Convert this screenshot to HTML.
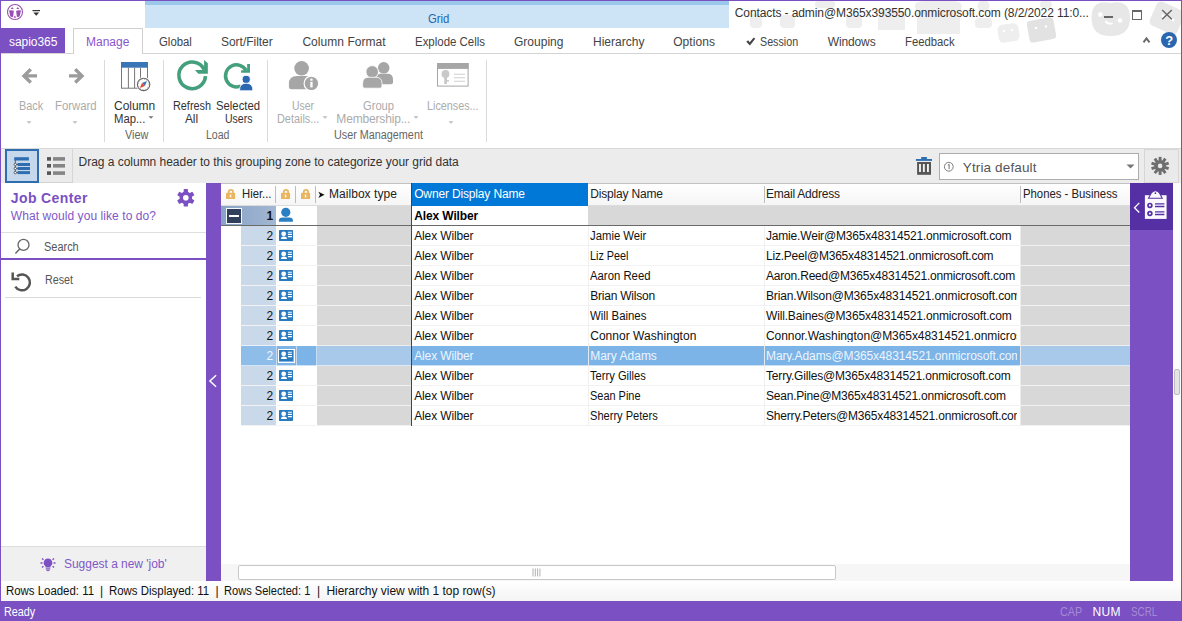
<!DOCTYPE html>
<html lang="en"><head><meta charset="utf-8"><title>sapio365 - Contacts</title>
<style>
html,body{margin:0;padding:0}
body{width:1182px;height:621px;overflow:hidden;background:#fff;position:relative;font-family:"Liberation Sans", sans-serif;font-size:12px}
#app{position:absolute;left:0;top:0;width:1182px;height:621px;overflow:hidden;background:#fff}
#app div,#app span,#app svg{position:absolute}
#app header,#app nav,#app section,#app aside,#app main,#app footer{position:absolute;left:0;top:0;width:0;height:0}
#app span{white-space:nowrap;display:block}
#app svg{overflow:visible}
</style></head><body><div id="app">
<header>
<svg style="left:729px;top:1px" width="452" height="52" viewBox="729 1 452 52"><g fill="#eeeeee"><rect x="750" y="14" width="12" height="14" rx="4"/><rect x="780" y="15" width="15" height="13" rx="4"/><rect x="815" y="1" width="20" height="7" rx="3"/><rect x="846" y="15" width="16" height="13" rx="4"/><path d="M878 30 V16 Q878 8 891.500 8 Q905 8 905 16 V30 Z"/><path d="M917 34 V12 Q910 1 925 1 H952 Q966 1 960 12 V34 Z"/><circle cx="983.500" cy="6" r="6"/><rect x="975" y="18" width="17" height="10" rx="4"/><rect x="998" y="24" width="21" height="18" rx="5" transform="rotate(-8 1008 33)"/><rect x="1028" y="19" width="27" height="22" rx="4" transform="rotate(-10 1041 30)" fill="#e2e2e2"/><rect x="1040" y="1" width="12" height="7" rx="3"/><path d="M1110.500 3 Q1130 -1 1130 18 Q1130 36 1110.500 36 Q1091.500 36 1091.500 18 Q1091.500 -1 1110.500 3 Z" fill="#e7e7e7"/><rect x="1152" y="5" width="30" height="26" rx="5" transform="rotate(24 1167 18)" fill="#e8e8e8"/></g><g fill="#fff"><circle cx="1100.300" cy="14.600" r="2.300"/><circle cx="1120" cy="20.500" r="2.300"/><path d="M1104.500 21.500 q3.500 5 8.500 2.500 l-0.600 -1.600 q-3.500 1.500 -6.300 -1.800 z"/><circle cx="1036" cy="28" r="1.300"/><circle cx="1046" cy="26.500" r="1.300"/><circle cx="1004" cy="31" r="1.200"/><circle cx="1012" cy="30" r="1.200"/><circle cx="1163" cy="16" r="1.400"/><circle cx="1173" cy="20" r="1.400"/></g></svg>
<div style="left:145px;top:1px;width:584px;height:27px;background:#cde3f6;"></div>
<div style="left:145px;top:1px;width:584px;height:4px;background:#9ac7ea;"></div>
<span style="left:428.2px;top:13px;font-size:12px;line-height:12px;color:#2468a8;transform:scaleX(0.9439);transform-origin:0 0;">Grid</span>
<span style="left:734.8px;top:7px;font-size:12px;line-height:12px;color:#333;letter-spacing:-0.100px;">Contacts - admin@M365x393550.onmicrosoft.com (8/2/2022 11:0...</span>
<svg style="left:6px;top:3px" width="18" height="18" viewBox="6 3 18 18"><circle cx="15" cy="12" r="7.500" fill="#fff" stroke="#9a4fb3" stroke-width="1.100"/><path d="M9 10.500 Q11.500 9.700 13.900 10.700 L13.100 16.700 Q11.600 17.500 10.300 16.300 Z M21 10.500 Q18.500 9.700 16.100 10.700 L16.900 16.700 Q18.400 17.500 19.700 16.300 Z" fill="#9a4fb3"/><path d="M10.700 9 L12.200 7 L13.700 9 Z M16.300 9 L17.800 7 L19.300 9 Z M13.600 17.800 L14.900 15.400 L16.200 17.800 Z" fill="#9a4fb3"/></svg>
<svg style="left:32px;top:9px" width="9" height="8" viewBox="32 9 9 8"><rect x="32.500" y="10" width="7.500" height="1.200" fill="#333"/><path d="M33.300 12.600 H39.200 L36.250 15.800 Z" fill="#333"/></svg>
<div style="left:1104px;top:16px;width:9px;height:2px;background:#666;"></div>
<div style="left:1132px;top:10px;width:8px;height:6.500px;border:1px solid #666;border-top-width:2.400px"></div>
<svg style="left:1161.5px;top:10px" width="10" height="10" viewBox="1161.5 10 10 10"><path d="M1161.700 10 L1171.300 19.300 M1171.300 10 L1161.700 19.300" stroke="#666" stroke-width="1.400" fill="none"/></svg>
</header>
<nav>
<div style="left:1px;top:53px;width:1180px;height:1px;background:#d4d4d4;"></div>
<div style="left:1px;top:28px;width:64px;height:24.5px;background:#7a50c2;"></div>
<span style="left:9px;top:36px;font-size:12px;line-height:12px;color:#fff;letter-spacing:-0.043px;">sapio365</span>
<div style="left:73px;top:28px;width:68px;height:25px;background:#fff;border:1px solid #d0d0d0;border-bottom:none"></div>
<span style="left:86px;top:36px;font-size:12px;line-height:12px;color:#8a55d0;letter-spacing:0.005px;">Manage</span>
<span style="left:158.5px;top:36px;font-size:12px;line-height:12px;color:#444;transform:scaleX(0.9485);transform-origin:0 0;">Global</span>
<span style="left:221px;top:36px;font-size:12px;line-height:12px;color:#444;letter-spacing:-0.030px;">Sort/Filter</span>
<span style="left:302.4px;top:36px;font-size:12px;line-height:12px;color:#444;letter-spacing:0.049px;">Column Format</span>
<span style="left:415px;top:36px;font-size:12px;line-height:12px;color:#444;transform:scaleX(0.9540);transform-origin:0 0;">Explode Cells</span>
<span style="left:514px;top:36px;font-size:12px;line-height:12px;color:#444;letter-spacing:0.017px;">Grouping</span>
<span style="left:593px;top:36px;font-size:12px;line-height:12px;color:#444;letter-spacing:0.005px;">Hierarchy</span>
<span style="left:673.2px;top:36px;font-size:12px;line-height:12px;color:#444;letter-spacing:0.068px;">Options</span>
<span style="left:759.6px;top:36px;font-size:12px;line-height:12px;color:#444;transform:scaleX(0.8922);transform-origin:0 0;">Session</span>
<span style="left:827.7px;top:36px;font-size:12px;line-height:12px;color:#444;letter-spacing:-0.121px;">Windows</span>
<span style="left:905px;top:36px;font-size:12px;line-height:12px;color:#444;transform:scaleX(0.9411);transform-origin:0 0;">Feedback</span>
<svg style="left:745px;top:37px" width="11" height="10" viewBox="745 37 11 10"><path d="M746.300 41.800 L748.100 40.200 L749.700 42.300 L753.700 37.600 L755.200 38.800 L749.900 45.600 Z" fill="#444"/></svg>
<svg style="left:1143px;top:37px" width="8" height="7" viewBox="1143 37 8 7"><path d="M1143.500 42.300 L1146.500 38.400 L1149.500 42.300" stroke="#686868" stroke-width="1.900" fill="none"/></svg>
<div style="left:1161px;top:32px;width:16px;height:16px;border-radius:50%;background:#2b67b1"></div>
<span style="left:1165.2px;top:34px;font-size:13px;line-height:13px;color:#fff;font-weight:700;">?</span>
</nav>
<section>
<div style="left:104px;top:60px;width:1px;height:82px;background:#dadada;"></div>
<div style="left:163px;top:60px;width:1px;height:82px;background:#dadada;"></div>
<div style="left:267px;top:60px;width:1px;height:82px;background:#dadada;"></div>
<div style="left:486px;top:60px;width:1px;height:82px;background:#dadada;"></div>
<svg style="left:20px;top:67px" width="18" height="18" viewBox="20 67 18 18"><path d="M37 75.900 H24.500 M30.800 69.300 L24 75.900 L30.800 82.500" stroke="#9b9b9b" stroke-width="3.400" fill="none"/></svg>
<svg style="left:68px;top:67px" width="18" height="18" viewBox="68 67 18 18"><path d="M69 75.900 H81.500 M75.200 69.300 L82 75.900 L75.200 82.500" stroke="#9b9b9b" stroke-width="3.400" fill="none"/></svg>
<span style="left:18.6px;top:100px;font-size:12px;line-height:12px;color:#ababab;transform:scaleX(0.9030);transform-origin:0 0;">Back</span>
<span style="left:54.7px;top:100px;font-size:12px;line-height:12px;color:#ababab;transform:scaleX(0.9451);transform-origin:0 0;">Forward</span>
<svg style="left:25.8px;top:121px" width="6" height="3" viewBox="25.8 121 6 3"><path d="M26.3 121.2 h5 l-2.500 2.600 Z" fill="#bcbcbc"/></svg>
<svg style="left:71.7px;top:121px" width="6" height="3" viewBox="71.7 121 6 3"><path d="M72.2 121.2 h5 l-2.500 2.600 Z" fill="#bcbcbc"/></svg>
<svg style="left:120px;top:61px" width="32" height="32" viewBox="120 61 32 32"><rect x="121.500" y="62.500" width="26" height="25.700" fill="#fff" stroke="#777"/><rect x="121" y="62" width="27" height="5.700" fill="#3a75b5"/><path d="M128.400 67.700 V88 M134.600 67.700 V88 M140.500 67.700 V88" stroke="#777" stroke-width="1"/><circle cx="143.600" cy="84.400" r="7.500" fill="#fff"/><circle cx="143.600" cy="84.400" r="6.200" fill="#fcfcfc" stroke="#666" stroke-width="1.100"/><circle cx="143.600" cy="84.400" r="5.200" fill="none" stroke="#888" stroke-width="0.900" stroke-dasharray="0.700 2.020"/><path d="M146.900 81 L144.900 86 L142 83 Z" fill="#3a75b5"/><path d="M139.900 87.900 L142 83 L144.900 86 Z" fill="#e2492f"/></svg>
<span style="left:114px;top:100px;font-size:12px;line-height:12px;color:#333;letter-spacing:-0.029px;">Column</span>
<span style="left:114px;top:113px;font-size:12px;line-height:12px;color:#333;transform:scaleX(0.9413);transform-origin:0 0;">Map...</span>
<svg style="left:147.8px;top:116px" width="6" height="3" viewBox="147.8 116 6 3"><path d="M148.3 116.2 h5 l-2.500 2.600 Z" fill="#777"/></svg>
<span style="left:124.6px;top:129px;font-size:12px;line-height:12px;color:#666;transform:scaleX(0.9071);transform-origin:0 0;">View</span>
<svg style="left:176px;top:59px" width="34" height="34" viewBox="176 59 34 34"><path d="M205.480 76.200 A13.300 13.300 0 1 1 204.200 69.600" stroke="#44a07c" stroke-width="3.600" fill="none"/><path d="M204.100 59.900 L207.850 63.200 V73.850 H198.300 L195 70.100 H204.100 Z" fill="#44a07c"/></svg>
<span style="left:172.5px;top:100px;font-size:12px;line-height:12px;color:#333;transform:scaleX(0.9041);transform-origin:0 0;">Refresh</span>
<span style="left:185px;top:113px;font-size:12px;line-height:12px;color:#333;letter-spacing:-0.138px;">All</span>
<svg style="left:223px;top:61px" width="32" height="32" viewBox="223 61 32 32"><path d="M240.800 86 A11 11 0 1 1 246.200 70.600" stroke="#44a07c" stroke-width="3.500" fill="none"/><path d="M247.150 64 H249.970 V72.700 H241.100 V70.300 H247.150 Z" fill="#44a07c"/><circle cx="246.200" cy="79.400" r="4.100" fill="#2c68b2" stroke="#fff" stroke-width="1"/><path d="M239.600 90.800 Q239.200 83.200 246.200 83.200 Q253.200 83.200 252.800 90.800 Z" fill="#2c68b2" stroke="#fff" stroke-width="0.800"/></svg>
<span style="left:216px;top:100px;font-size:12px;line-height:12px;color:#333;transform:scaleX(0.9421);transform-origin:0 0;">Selected</span>
<span style="left:224.5px;top:113px;font-size:12px;line-height:12px;color:#333;transform:scaleX(0.8774);transform-origin:0 0;">Users</span>
<span style="left:205.5px;top:129px;font-size:12px;line-height:12px;color:#666;transform:scaleX(0.8800);transform-origin:0 0;">Load</span>
<svg style="left:288px;top:60px" width="32" height="32" viewBox="288 60 32 32"><circle cx="301.600" cy="68.300" r="7.300" fill="#a6a6a6"/><path d="M288.900 87 V84 Q288.900 76 297 76 H306 Q314 76 314 84 V87 Q314 89.300 311.500 89.300 H291.400 Q288.900 89.300 288.900 87 Z" fill="#a6a6a6"/><circle cx="311.400" cy="83.400" r="7.300" fill="#a6a6a6" stroke="#fff" stroke-width="1.200"/><rect x="310.300" y="81.800" width="2.300" height="5.600" fill="#fff"/><rect x="310.300" y="78.600" width="2.300" height="2.100" fill="#fff"/></svg>
<span style="left:292.4px;top:100px;font-size:12px;line-height:12px;color:#ababab;transform:scaleX(0.8681);transform-origin:0 0;">User</span>
<span style="left:277px;top:113px;font-size:12px;line-height:12px;color:#ababab;transform:scaleX(0.9082);transform-origin:0 0;">Details...</span>
<svg style="left:322px;top:116px" width="6" height="3" viewBox="322 116 6 3"><path d="M322.5 116.2 h5 l-2.500 2.600 Z" fill="#bcbcbc"/></svg>
<svg style="left:362px;top:61px" width="33" height="28" viewBox="362 61 33 28"><circle cx="383.700" cy="67.800" r="5.800" fill="#a6a6a6"/><path d="M375 84.300 V79.500 Q375 73.700 380.500 73.700 H387.500 Q393 73.700 393 79.500 V82.300 Q393 84.300 391 84.300 Z" fill="#a6a6a6"/><circle cx="372.200" cy="71.900" r="6.300" fill="#a6a6a6" stroke="#fff" stroke-width="1"/><path d="M362.600 86 V83.500 Q362.600 77.300 368.500 77.300 H376 Q382 77.300 382 83.500 V86 Q382 88.200 379.800 88.200 H364.800 Q362.600 88.200 362.600 86 Z" fill="#a6a6a6" stroke="#fff" stroke-width="0.800"/></svg>
<span style="left:363px;top:100px;font-size:12px;line-height:12px;color:#ababab;transform:scaleX(0.9293);transform-origin:0 0;">Group</span>
<span style="left:336.3px;top:113px;font-size:12px;line-height:12px;color:#ababab;letter-spacing:-0.163px;">Membership...</span>
<svg style="left:412.9px;top:116px" width="6" height="3" viewBox="412.9 116 6 3"><path d="M413.4 116.2 h5 l-2.500 2.600 Z" fill="#bcbcbc"/></svg>
<svg style="left:437px;top:63px" width="32" height="24" viewBox="437 63 32 24"><rect x="437.500" y="63.500" width="30.600" height="22.600" fill="#fff" stroke="#a6a6a6"/><rect x="437" y="63" width="31.600" height="5.900" fill="#a6a6a6"/><circle cx="445.500" cy="74" r="3.900" fill="#c9c9c9"/><rect x="444.200" y="76" width="2.800" height="8" fill="#c9c9c9"/><rect x="446.500" y="80" width="2.400" height="1.600" fill="#c9c9c9"/><path d="M454 74.200 H465 M454 77.800 H465 M454 81.300 H465" stroke="#cfcfcf" stroke-width="1.100"/></svg>
<span style="left:426.5px;top:100px;font-size:12px;line-height:12px;color:#ababab;transform:scaleX(0.8976);transform-origin:0 0;">Licenses...</span>
<svg style="left:448.4px;top:121px" width="6" height="3" viewBox="448.4 121 6 3"><path d="M448.9 121.2 h5 l-2.500 2.600 Z" fill="#bcbcbc"/></svg>
<span style="left:333.5px;top:129px;font-size:12px;line-height:12px;color:#666;transform:scaleX(0.9005);transform-origin:0 0;">User Management</span>
</section>
<section>
<div style="left:1px;top:148px;width:1180px;height:35px;background:#ececec;"></div>
<div style="left:1px;top:148px;width:1180px;height:1px;background:#dadada;"></div>
<div style="left:5px;top:149px;width:30px;height:30px;background:#c6d9ec;border:2px solid #2e6eb0"></div>
<svg style="left:13px;top:156px" width="19" height="20" viewBox="13 156 19 20"><g fill="#2e6eb0"><rect x="14.200" y="157.200" width="14.700" height="3.300"/><rect x="17.600" y="163" width="12.400" height="3"/><rect x="17.600" y="167" width="12.400" height="3"/><rect x="17.600" y="171.100" width="12.400" height="3"/></g><path d="M15.300 160 V172.600 M15.300 164.500 H18 M15.300 168.500 H18 M15.300 172.600 H18" stroke="#444" stroke-width="0.800" fill="none"/><g fill="#fff" stroke="#444" stroke-width="0.800"><circle cx="15.300" cy="164.500" r="1.200"/><circle cx="15.300" cy="168.500" r="1.200"/><circle cx="15.300" cy="172.600" r="1.200"/></g></svg>
<div style="left:39px;top:149px;width:33px;height:33px;background:#ebebeb;border-right:1px solid #d6d6d6;border-bottom:1px solid #d2d2d2"></div>
<svg style="left:47px;top:157px" width="19" height="18" viewBox="47 157 19 18"><g fill="#555"><rect x="47" y="157.100" width="4" height="3.600"/><rect x="47" y="164" width="4" height="3.600"/><rect x="47" y="171.300" width="4" height="3.600"/></g><g fill="#858585"><rect x="53" y="157.100" width="12" height="3.600"/><rect x="53" y="164" width="12" height="3.600"/><rect x="53" y="171.300" width="12" height="3.600"/></g></svg>
<span style="left:78.6px;top:156px;font-size:12px;line-height:12px;color:#333;letter-spacing:-0.029px;">Drag a column header to this grouping zone to categorize your grid data</span>
<svg style="left:915px;top:157px" width="18" height="18" viewBox="915 157 18 18"><rect x="915.900" y="159" width="16.100" height="1.900" fill="#2f6fb3"/><rect x="921.200" y="157" width="5.700" height="2.200" fill="#2f6fb3"/><path d="M917.100 162 H931 V174.800 H917.100 Z" fill="#555"/><path d="M920 163.900 V171.900 M923.850 163.900 V171.900 M927.950 163.900 V171.900" stroke="#f2f2f2" stroke-width="1.900"/></svg>
<div style="left:939.300px;top:153.300px;width:198px;height:25px;background:#fff;border:1px solid #adadad"></div>
<svg style="left:944px;top:161px" width="11" height="11" viewBox="944 161 11 11"><circle cx="948.800" cy="166.750" r="4.400" fill="none" stroke="#707070" stroke-width="0.900"/><path d="M949.100 164.300 V169.200 M947.900 165.300 L949.100 164.300" stroke="#707070" stroke-width="1" fill="none"/></svg>
<span style="left:962.8px;top:161px;font-size:13.5px;line-height:13.5px;color:#555;letter-spacing:0.132px;">Ytria default</span>
<svg style="left:1126px;top:164px" width="9" height="5" viewBox="1126 164 9 5"><path d="M1126.500 164.500 H1134.500 L1130.500 168.500 Z" fill="#777"/></svg>
<div style="left:1143.500px;top:149px;width:33px;height:32px;border:1px solid #d6d6d6;background:#eaeaea"></div>
<svg style="left:1150px;top:157px" width="20" height="20" viewBox="1150 157 20 20"><g transform="translate(1160.100 165.900)" fill="#6e6e6e"><rect x="-1.450" y="-9" width="2.900" height="5" transform="rotate(0)"/><rect x="-1.450" y="-9" width="2.900" height="5" transform="rotate(36)"/><rect x="-1.450" y="-9" width="2.900" height="5" transform="rotate(72)"/><rect x="-1.450" y="-9" width="2.900" height="5" transform="rotate(108)"/><rect x="-1.450" y="-9" width="2.900" height="5" transform="rotate(144)"/><rect x="-1.450" y="-9" width="2.900" height="5" transform="rotate(180)"/><rect x="-1.450" y="-9" width="2.900" height="5" transform="rotate(216)"/><rect x="-1.450" y="-9" width="2.900" height="5" transform="rotate(252)"/><rect x="-1.450" y="-9" width="2.900" height="5" transform="rotate(288)"/><rect x="-1.450" y="-9" width="2.900" height="5" transform="rotate(324)"/><circle r="5.700"/><circle r="2.300" fill="#eaeaea"/></g></svg>
</section>
<aside>
<div style="left:1px;top:183px;width:204.5px;height:398px;background:#fff;"></div>
<span style="left:10.8px;top:191px;font-size:14px;line-height:14px;color:#7a50c2;font-weight:700;letter-spacing:0.387px;">Job Center</span>
<span style="left:10.8px;top:210px;font-size:12px;line-height:12px;color:#8058c9;letter-spacing:0.070px;">What would you like to do?</span>
<svg style="left:177px;top:189px" width="18" height="18" viewBox="177 189 18 18"><g transform="translate(185.800 197.800)" fill="#7a50c2"><rect x="-2.150" y="-8.800" width="4.300" height="5" rx="0.700" transform="rotate(0)"/><rect x="-2.150" y="-8.800" width="4.300" height="5" rx="0.700" transform="rotate(60)"/><rect x="-2.150" y="-8.800" width="4.300" height="5" rx="0.700" transform="rotate(120)"/><rect x="-2.150" y="-8.800" width="4.300" height="5" rx="0.700" transform="rotate(180)"/><rect x="-2.150" y="-8.800" width="4.300" height="5" rx="0.700" transform="rotate(240)"/><rect x="-2.150" y="-8.800" width="4.300" height="5" rx="0.700" transform="rotate(300)"/><circle r="6.300"/><circle r="2.800" fill="#fff"/></g></svg>
<div style="left:1px;top:232px;width:204.5px;height:1px;background:#dedede;"></div>
<svg style="left:14px;top:238px" width="16" height="16" viewBox="14 238 16 16"><circle cx="23.500" cy="244.900" r="5.500" fill="none" stroke="#666" stroke-width="1.300"/><path d="M19.700 249 L15.400 253.400" stroke="#666" stroke-width="1.500"/></svg>
<span style="left:43.8px;top:241px;font-size:12px;line-height:12px;color:#555;transform:scaleX(0.9124);transform-origin:0 0;">Search</span>
<div style="left:1px;top:258.4px;width:204.5px;height:1.5px;background:#7a50c2;"></div>
<svg style="left:11px;top:271px" width="21" height="21" viewBox="11 271 21 21"><path d="M17 276.300 A7.900 7.900 0 1 1 15.300 286.600" fill="none" stroke="#555" stroke-width="2.500"/><path d="M12.700 272.500 V278.900 H19.300" fill="none" stroke="#555" stroke-width="2.500"/></svg>
<span style="left:44.5px;top:274px;font-size:12px;line-height:12px;color:#555;transform:scaleX(0.8961);transform-origin:0 0;">Reset</span>
<div style="left:5px;top:297px;width:196px;height:1px;background:#d9d9d9;"></div>
<div style="left:1px;top:546px;width:204.5px;height:35px;background:#f0f0f0;"></div>
<div style="left:1px;top:546px;width:204.5px;height:1px;background:#dcdcdc;"></div>
<svg style="left:40px;top:556px" width="16" height="16" viewBox="40 556 16 16"><g fill="#7a50c2"><path d="M48 558.500 A4.300 4.300 0 0 1 50.500 566.300 V567.500 H45.500 V566.300 A4.300 4.300 0 0 1 48 558.500 Z"/><rect x="45.800" y="568.300" width="4.400" height="1.300"/><rect x="46.600" y="570.100" width="2.800" height="1"/></g><g stroke="#7a50c2" stroke-width="1.400"><path d="M40.500 563 H42.500 M53.500 563 H55.500 M42 558.500 L43.400 559.700 M54 558.500 L52.600 559.700 M42 567.500 L43.400 566.300 M54 567.500 L52.600 566.300"/></g></svg>
<span style="left:64px;top:558px;font-size:12px;line-height:12px;color:#8058c9;letter-spacing:-0.029px;">Suggest a new 'job'</span>
</aside>
<div style="left:205.5px;top:183px;width:15.5px;height:398px;background:#7a50c2;"></div>
<svg style="left:208px;top:374px" width="10" height="14" viewBox="208 374 10 14"><path d="M216.100 375.300 L209.900 381 L216.100 386.700" stroke="#fff" stroke-width="1.500" fill="none"/></svg>
<main>
<div style="left:221px;top:183px;width:909.5px;height:22.5px;background:linear-gradient(#ffffff,#f5f5f5);"></div>
<div style="left:221px;top:183px;width:909.5px;height:1px;background:#c2c2c2;"></div>
<div style="left:221px;top:205px;width:909.5px;height:1px;background:#dcdcdc;"></div>
<div style="left:411.5px;top:183px;width:176.5px;height:22.5px;background:#0078d7;"></div>
<div style="left:275px;top:186px;width:1px;height:17px;background:#bdbdbd;"></div>
<div style="left:295px;top:186px;width:1px;height:17px;background:#bdbdbd;"></div>
<div style="left:315px;top:186px;width:1px;height:17px;background:#bdbdbd;"></div>
<div style="left:763.5px;top:186px;width:1px;height:17px;background:#bdbdbd;"></div>
<div style="left:1019.5px;top:186px;width:1px;height:17px;background:#bdbdbd;"></div>
<svg style="left:225.9px;top:188px" width="10" height="12" viewBox="225.9 188 10 12"><path d="M228.65 193.500 V192 A2.200 2.200 0 0 1 233.05 192 V193.500" fill="none" stroke="#e9b55f" stroke-width="1.700"/><rect x="225.9" y="192.700" width="9.100" height="6.400" rx="0.900" fill="#e9b55f"/><rect x="229.7" y="194.600" width="1.500" height="2.800" fill="#fff8ea"/></svg>
<svg style="left:280.9px;top:188px" width="10" height="12" viewBox="280.9 188 10 12"><path d="M283.65 193.500 V192 A2.200 2.200 0 0 1 288.05 192 V193.500" fill="none" stroke="#e9b55f" stroke-width="1.700"/><rect x="280.9" y="192.700" width="9.100" height="6.400" rx="0.900" fill="#e9b55f"/><rect x="284.7" y="194.600" width="1.500" height="2.800" fill="#fff8ea"/></svg>
<svg style="left:301px;top:188px" width="10" height="12" viewBox="301 188 10 12"><path d="M303.75 193.500 V192 A2.200 2.200 0 0 1 308.15 192 V193.500" fill="none" stroke="#e9b55f" stroke-width="1.700"/><rect x="301" y="192.700" width="9.100" height="6.400" rx="0.900" fill="#e9b55f"/><rect x="304.8" y="194.600" width="1.500" height="2.800" fill="#fff8ea"/></svg>
<span style="left:241.9px;top:188px;font-size:12px;line-height:12px;color:#222;transform:scaleX(0.9380);transform-origin:0 0;">Hier...</span>
<svg style="left:318px;top:191px" width="7" height="8" viewBox="318 191 7 8"><path d="M318.400 191.700 L324.500 194.800 L318.400 197.900 L320 194.800 Z" fill="#111"/></svg>
<span style="left:328.9px;top:188px;font-size:12px;line-height:12px;color:#222;letter-spacing:0.063px;">Mailbox type</span>
<span style="left:414.2px;top:188px;font-size:12px;line-height:12px;color:#fff;letter-spacing:-0.153px;">Owner Display Name</span>
<span style="left:590.2px;top:188px;font-size:12px;line-height:12px;color:#222;letter-spacing:-0.183px;">Display Name</span>
<span style="left:766px;top:188px;font-size:12px;line-height:12px;color:#222;letter-spacing:-0.224px;">Email Address</span>
<span style="left:1022.5px;top:188px;font-size:12px;line-height:12px;color:#222;transform:scaleX(0.9444);transform-origin:0 0;">Phones - Business</span>
<div style="left:221px;top:205.5px;width:55px;height:20px;background:linear-gradient(90deg,#88a3c6,#a2b7d2);"></div>
<div style="left:317px;top:205.5px;width:94px;height:20px;background:#d8d8d8;"></div>
<div style="left:588px;top:205.5px;width:542.5px;height:20px;background:#d8d8d8;"></div>
<div style="left:226px;top:208px;width:14px;height:14px;background:#2f3f5c;border:1px solid #f4f7fb"></div>
<div style="left:228.7px;top:214.6px;width:10.6px;height:2.7px;background:#fff;"></div>
<span style="left:266.4px;top:210px;font-size:12px;line-height:12px;color:#111;font-weight:700;">1</span>
<svg style="left:278px;top:207px" width="16" height="16" viewBox="278 207 16 16"><circle cx="285.800" cy="212.300" r="4.600" fill="#2b7fc3"/><path d="M278.900 221.800 V220.500 Q278.900 217.400 282.500 217.400 H289.300 Q292.900 217.400 292.900 220.500 V221.800 Z" fill="#2b7fc3"/></svg>
<span style="left:414.2px;top:210px;font-size:12px;line-height:12px;color:#000;font-weight:700;letter-spacing:-0.119px;">Alex Wilber</span>
<div style="left:241px;top:225.5px;width:35px;height:20px;background:#c9d9ea;"></div>
<div style="left:317px;top:225.5px;width:94px;height:20px;background:#d8d8d8;"></div>
<div style="left:1020px;top:225.5px;width:110.5px;height:20px;background:#d8d8d8;"></div>
<span style="left:266.6px;top:230px;font-size:12px;line-height:12px;color:#111;">2</span>
<svg style="left:279px;top:230px" width="14" height="11" viewBox="279 230 14 11"><rect x="279" y="230" width="14" height="10.900" rx="0.600" fill="#2a7abf"/><circle cx="283.700" cy="233.8" r="2.400" fill="#fff"/><path d="M281 238.9 Q281 236.6 283.900 236.6 Q286.900 236.6 286.900 238.9 Z" fill="#fff"/><path d="M287.900 232.3 H291.900 M287.900 234.4 H291.900 M287.900 236.6 H291.900" stroke="#fff" stroke-width="1.100"/></svg>
<span style="left:414.2px;top:230px;font-size:12px;line-height:12px;color:#111;letter-spacing:-0.132px;">Alex Wilber</span>
<span style="left:590.2px;top:230px;font-size:12px;line-height:12px;color:#111;transform:scaleX(0.9432);transform-origin:0 0;">Jamie Weir</span>
<span style="left:766px;top:230px;font-size:12px;line-height:12px;color:#111;letter-spacing:-0.186px;">Jamie.Weir@M365x48314521.onmicrosoft.com</span>
<div style="left:241px;top:245.5px;width:35px;height:20px;background:#c9d9ea;"></div>
<div style="left:317px;top:245.5px;width:94px;height:20px;background:#d8d8d8;"></div>
<div style="left:1020px;top:245.5px;width:110.5px;height:20px;background:#d8d8d8;"></div>
<span style="left:266.6px;top:250px;font-size:12px;line-height:12px;color:#111;">2</span>
<svg style="left:279px;top:250px" width="14" height="11" viewBox="279 250 14 11"><rect x="279" y="250" width="14" height="10.900" rx="0.600" fill="#2a7abf"/><circle cx="283.700" cy="253.8" r="2.400" fill="#fff"/><path d="M281 258.9 Q281 256.6 283.900 256.6 Q286.900 256.6 286.900 258.9 Z" fill="#fff"/><path d="M287.900 252.3 H291.900 M287.900 254.4 H291.900 M287.900 256.6 H291.900" stroke="#fff" stroke-width="1.100"/></svg>
<span style="left:414.2px;top:250px;font-size:12px;line-height:12px;color:#111;letter-spacing:-0.132px;">Alex Wilber</span>
<span style="left:590.2px;top:250px;font-size:12px;line-height:12px;color:#111;transform:scaleX(0.9016);transform-origin:0 0;">Liz Peel</span>
<span style="left:766px;top:250px;font-size:12px;line-height:12px;color:#111;letter-spacing:-0.217px;">Liz.Peel@M365x48314521.onmicrosoft.com</span>
<div style="left:241px;top:265.5px;width:35px;height:20px;background:#c9d9ea;"></div>
<div style="left:317px;top:265.5px;width:94px;height:20px;background:#d8d8d8;"></div>
<div style="left:1020px;top:265.5px;width:110.5px;height:20px;background:#d8d8d8;"></div>
<span style="left:266.6px;top:270px;font-size:12px;line-height:12px;color:#111;">2</span>
<svg style="left:279px;top:270px" width="14" height="11" viewBox="279 270 14 11"><rect x="279" y="270" width="14" height="10.900" rx="0.600" fill="#2a7abf"/><circle cx="283.700" cy="273.8" r="2.400" fill="#fff"/><path d="M281 278.9 Q281 276.6 283.900 276.6 Q286.900 276.6 286.900 278.9 Z" fill="#fff"/><path d="M287.900 272.3 H291.900 M287.900 274.4 H291.900 M287.900 276.6 H291.900" stroke="#fff" stroke-width="1.100"/></svg>
<span style="left:414.2px;top:270px;font-size:12px;line-height:12px;color:#111;letter-spacing:-0.132px;">Alex Wilber</span>
<span style="left:590.2px;top:270px;font-size:12px;line-height:12px;color:#111;transform:scaleX(0.9446);transform-origin:0 0;">Aaron Reed</span>
<span style="left:766px;top:270px;font-size:12px;line-height:12px;color:#111;letter-spacing:-0.197px;">Aaron.Reed@M365x48314521.onmicrosoft.com</span>
<div style="left:241px;top:285.5px;width:35px;height:20px;background:#c9d9ea;"></div>
<div style="left:317px;top:285.5px;width:94px;height:20px;background:#d8d8d8;"></div>
<div style="left:1020px;top:285.5px;width:110.5px;height:20px;background:#d8d8d8;"></div>
<span style="left:266.6px;top:290px;font-size:12px;line-height:12px;color:#111;">2</span>
<svg style="left:279px;top:290px" width="14" height="11" viewBox="279 290 14 11"><rect x="279" y="290" width="14" height="10.900" rx="0.600" fill="#2a7abf"/><circle cx="283.700" cy="293.8" r="2.400" fill="#fff"/><path d="M281 298.9 Q281 296.6 283.900 296.6 Q286.900 296.6 286.900 298.9 Z" fill="#fff"/><path d="M287.900 292.3 H291.900 M287.900 294.4 H291.900 M287.900 296.6 H291.900" stroke="#fff" stroke-width="1.100"/></svg>
<span style="left:414.2px;top:290px;font-size:12px;line-height:12px;color:#111;letter-spacing:-0.132px;">Alex Wilber</span>
<span style="left:590.2px;top:290px;font-size:12px;line-height:12px;color:#111;letter-spacing:-0.223px;">Brian Wilson</span>
<span style="left:766px;top:290px;font-size:12px;line-height:12px;color:#111;letter-spacing:-0.140px;width:251px;overflow:hidden;">Brian.Wilson@M365x48314521.onmicrosoft.com</span>
<div style="left:241px;top:305.5px;width:35px;height:20px;background:#c9d9ea;"></div>
<div style="left:317px;top:305.5px;width:94px;height:20px;background:#d8d8d8;"></div>
<div style="left:1020px;top:305.5px;width:110.5px;height:20px;background:#d8d8d8;"></div>
<span style="left:266.6px;top:310px;font-size:12px;line-height:12px;color:#111;">2</span>
<svg style="left:279px;top:310px" width="14" height="11" viewBox="279 310 14 11"><rect x="279" y="310" width="14" height="10.900" rx="0.600" fill="#2a7abf"/><circle cx="283.700" cy="313.8" r="2.400" fill="#fff"/><path d="M281 318.9 Q281 316.6 283.900 316.6 Q286.900 316.6 286.900 318.9 Z" fill="#fff"/><path d="M287.900 312.3 H291.900 M287.900 314.4 H291.900 M287.900 316.6 H291.900" stroke="#fff" stroke-width="1.100"/></svg>
<span style="left:414.2px;top:310px;font-size:12px;line-height:12px;color:#111;letter-spacing:-0.132px;">Alex Wilber</span>
<span style="left:590.2px;top:310px;font-size:12px;line-height:12px;color:#111;transform:scaleX(0.9501);transform-origin:0 0;">Will Baines</span>
<span style="left:766px;top:310px;font-size:12px;line-height:12px;color:#111;letter-spacing:-0.166px;">Will.Baines@M365x48314521.onmicrosoft.com</span>
<div style="left:241px;top:325.5px;width:35px;height:20px;background:#c9d9ea;"></div>
<div style="left:317px;top:325.5px;width:94px;height:20px;background:#d8d8d8;"></div>
<div style="left:1020px;top:325.5px;width:110.5px;height:20px;background:#d8d8d8;"></div>
<span style="left:266.6px;top:330px;font-size:12px;line-height:12px;color:#111;">2</span>
<svg style="left:279px;top:330px" width="14" height="11" viewBox="279 330 14 11"><rect x="279" y="330" width="14" height="10.900" rx="0.600" fill="#2a7abf"/><circle cx="283.700" cy="333.8" r="2.400" fill="#fff"/><path d="M281 338.9 Q281 336.6 283.900 336.6 Q286.900 336.6 286.900 338.9 Z" fill="#fff"/><path d="M287.900 332.3 H291.900 M287.900 334.4 H291.900 M287.900 336.6 H291.900" stroke="#fff" stroke-width="1.100"/></svg>
<span style="left:414.2px;top:330px;font-size:12px;line-height:12px;color:#111;letter-spacing:-0.132px;">Alex Wilber</span>
<span style="left:590.2px;top:330px;font-size:12px;line-height:12px;color:#111;letter-spacing:0.035px;">Connor Washington</span>
<span style="left:766px;top:330px;font-size:12px;line-height:12px;color:#111;letter-spacing:-0.056px;width:251px;overflow:hidden;">Connor.Washington@M365x48314521.onmicrosoft.com</span>
<div style="left:241px;top:345.5px;width:35px;height:20px;background:#8fbdea;"></div>
<div style="left:276px;top:345.5px;width:41px;height:20px;background:#7cb4e8;"></div>
<div style="left:317px;top:345.5px;width:94px;height:20px;background:#a9c9ea;"></div>
<div style="left:411px;top:345.5px;width:609px;height:20px;background:#7cb4e8;"></div>
<div style="left:1020px;top:345.5px;width:110.5px;height:20px;background:#a9c9ea;"></div>
<span style="left:266.6px;top:350px;font-size:12px;line-height:12px;color:#eef5fc;">2</span>
<div style="left:277.500px;top:348.5px;width:15px;height:12px;border:1px solid #fff"></div>
<svg style="left:279px;top:350px" width="14" height="11" viewBox="279 350 14 11"><rect x="279" y="350" width="14" height="10.900" rx="0.600" fill="#2a7abf"/><circle cx="283.700" cy="353.8" r="2.400" fill="#fff"/><path d="M281 358.9 Q281 356.6 283.900 356.6 Q286.900 356.6 286.900 358.9 Z" fill="#fff"/><path d="M287.900 352.3 H291.900 M287.900 354.4 H291.900 M287.900 356.6 H291.900" stroke="#fff" stroke-width="1.100"/></svg>
<span style="left:414.2px;top:350px;font-size:12px;line-height:12px;color:#eef5fc;letter-spacing:-0.132px;">Alex Wilber</span>
<span style="left:590.2px;top:350px;font-size:12px;line-height:12px;color:#eef5fc;">Mary Adams</span>
<span style="left:766px;top:350px;font-size:12px;line-height:12px;color:#eef5fc;letter-spacing:-0.104px;width:251px;overflow:hidden;">Mary.Adams@M365x48314521.onmicrosoft.com</span>
<div style="left:241px;top:365.5px;width:35px;height:20px;background:#c9d9ea;"></div>
<div style="left:317px;top:365.5px;width:94px;height:20px;background:#d8d8d8;"></div>
<div style="left:1020px;top:365.5px;width:110.5px;height:20px;background:#d8d8d8;"></div>
<span style="left:266.6px;top:370px;font-size:12px;line-height:12px;color:#111;">2</span>
<svg style="left:279px;top:370px" width="14" height="11" viewBox="279 370 14 11"><rect x="279" y="370" width="14" height="10.900" rx="0.600" fill="#2a7abf"/><circle cx="283.700" cy="373.8" r="2.400" fill="#fff"/><path d="M281 378.9 Q281 376.6 283.900 376.6 Q286.900 376.6 286.900 378.9 Z" fill="#fff"/><path d="M287.900 372.3 H291.900 M287.900 374.4 H291.900 M287.900 376.6 H291.900" stroke="#fff" stroke-width="1.100"/></svg>
<span style="left:414.2px;top:370px;font-size:12px;line-height:12px;color:#111;letter-spacing:-0.132px;">Alex Wilber</span>
<span style="left:590.2px;top:370px;font-size:12px;line-height:12px;color:#111;transform:scaleX(0.9298);transform-origin:0 0;">Terry Gilles</span>
<span style="left:766px;top:370px;font-size:12px;line-height:12px;color:#111;letter-spacing:-0.180px;">Terry.Gilles@M365x48314521.onmicrosoft.com</span>
<div style="left:241px;top:385.5px;width:35px;height:20px;background:#c9d9ea;"></div>
<div style="left:317px;top:385.5px;width:94px;height:20px;background:#d8d8d8;"></div>
<div style="left:1020px;top:385.5px;width:110.5px;height:20px;background:#d8d8d8;"></div>
<span style="left:266.6px;top:390px;font-size:12px;line-height:12px;color:#111;">2</span>
<svg style="left:279px;top:390px" width="14" height="11" viewBox="279 390 14 11"><rect x="279" y="390" width="14" height="10.900" rx="0.600" fill="#2a7abf"/><circle cx="283.700" cy="393.8" r="2.400" fill="#fff"/><path d="M281 398.9 Q281 396.6 283.900 396.6 Q286.900 396.6 286.900 398.9 Z" fill="#fff"/><path d="M287.900 392.3 H291.900 M287.900 394.4 H291.900 M287.900 396.6 H291.900" stroke="#fff" stroke-width="1.100"/></svg>
<span style="left:414.2px;top:390px;font-size:12px;line-height:12px;color:#111;letter-spacing:-0.132px;">Alex Wilber</span>
<span style="left:590.2px;top:390px;font-size:12px;line-height:12px;color:#111;transform:scaleX(0.9117);transform-origin:0 0;">Sean Pine</span>
<span style="left:766px;top:390px;font-size:12px;line-height:12px;color:#111;letter-spacing:-0.222px;">Sean.Pine@M365x48314521.onmicrosoft.com</span>
<div style="left:241px;top:405.5px;width:35px;height:20px;background:#c9d9ea;"></div>
<div style="left:317px;top:405.5px;width:94px;height:20px;background:#d8d8d8;"></div>
<div style="left:1020px;top:405.5px;width:110.5px;height:20px;background:#d8d8d8;"></div>
<span style="left:266.6px;top:410px;font-size:12px;line-height:12px;color:#111;">2</span>
<svg style="left:279px;top:410px" width="14" height="11" viewBox="279 410 14 11"><rect x="279" y="410" width="14" height="10.900" rx="0.600" fill="#2a7abf"/><circle cx="283.700" cy="413.8" r="2.400" fill="#fff"/><path d="M281 418.9 Q281 416.6 283.900 416.6 Q286.900 416.6 286.900 418.9 Z" fill="#fff"/><path d="M287.900 412.3 H291.900 M287.900 414.4 H291.900 M287.900 416.6 H291.900" stroke="#fff" stroke-width="1.100"/></svg>
<span style="left:414.2px;top:410px;font-size:12px;line-height:12px;color:#111;letter-spacing:-0.132px;">Alex Wilber</span>
<span style="left:590.2px;top:410px;font-size:12px;line-height:12px;color:#111;transform:scaleX(0.9229);transform-origin:0 0;">Sherry Peters</span>
<span style="left:766px;top:410px;font-size:12px;line-height:12px;color:#111;letter-spacing:-0.186px;width:251px;overflow:hidden;">Sherry.Peters@M365x48314521.onmicrosoft.com</span>
<div style="left:221px;top:224.7px;width:909.5px;height:1px;background:#6a6a6a;"></div>
<div style="left:241px;top:245px;width:889.5px;height:1px;background:#f2f2f2;"></div>
<div style="left:241px;top:265px;width:889.5px;height:1px;background:#f2f2f2;"></div>
<div style="left:241px;top:285px;width:889.5px;height:1px;background:#f2f2f2;"></div>
<div style="left:241px;top:305px;width:889.5px;height:1px;background:#f2f2f2;"></div>
<div style="left:241px;top:325px;width:889.5px;height:1px;background:#f2f2f2;"></div>
<div style="left:241px;top:345px;width:889.5px;height:1px;background:rgba(255,255,255,0.600);"></div>
<div style="left:241px;top:365px;width:889.5px;height:1px;background:rgba(255,255,255,0.600);"></div>
<div style="left:241px;top:385px;width:889.5px;height:1px;background:#f2f2f2;"></div>
<div style="left:241px;top:405px;width:889.5px;height:1px;background:#f2f2f2;"></div>
<div style="left:241px;top:425px;width:889.5px;height:1px;background:#f2f2f2;"></div>
<div style="left:276px;top:225.5px;width:1px;height:200px;background:rgba(255,255,255,0.550);"></div>
<div style="left:296px;top:225.5px;width:1px;height:200px;background:rgba(255,255,255,0.550);"></div>
<div style="left:316px;top:225.5px;width:1px;height:200px;background:rgba(255,255,255,0.550);"></div>
<div style="left:588px;top:225.5px;width:1px;height:200px;background:rgba(238,238,238,0.900);"></div>
<div style="left:764px;top:225.5px;width:1px;height:200px;background:rgba(238,238,238,0.900);"></div>
<div style="left:1019.5px;top:225.5px;width:1px;height:200px;background:rgba(238,238,238,0.900);"></div>
<div style="left:410.8px;top:183px;width:1.4px;height:242.5px;background:#3c4656;"></div>
<div style="left:221px;top:564px;width:909.5px;height:17px;background:#f6f6f6;"></div>
<div style="left:238px;top:565px;width:595.500px;height:12.500px;background:#fff;border:1px solid #c8c8c8;border-radius:2px"></div>
<svg style="left:532px;top:568px" width="10" height="9" viewBox="532 568 10 9"><path d="M533 568.500 V576.500 M535.300 568.500 V576.500 M537.600 568.500 V576.500 M539.900 568.500 V576.500" stroke="#a8a8a8" stroke-width="0.900"/></svg>
</main>
<aside>
<div style="left:1130px;top:183px;width:43px;height:398px;background:#7a50c2;"></div>
<div style="left:1130px;top:183px;width:43px;height:47px;background:#5530a5;"></div>
<svg style="left:1133px;top:202px" width="8" height="12" viewBox="1133 202 8 12"><path d="M1139.300 202.900 L1134.500 207.700 L1139.300 212.500" stroke="#fff" stroke-width="1.300" fill="none"/></svg>
<svg style="left:1144px;top:190px" width="24" height="30" viewBox="1144 190 24 30"><rect x="1144.900" y="195.200" width="21.700" height="23.700" fill="#fbf9fe"/><path d="M1148.500 198.300 L1151.300 193 Q1155.400 188.600 1159.500 193 L1162.200 198.300 Z" fill="#fbf9fe" stroke="#5530a5" stroke-width="1.100"/><circle cx="1155.400" cy="193.200" r="0.900" fill="#5530a5"/><g fill="none" stroke="#5530a5"><circle cx="1149.900" cy="205.400" r="1.900" stroke-width="1.700"/><circle cx="1149.900" cy="213.500" r="1.900" stroke-width="1.700"/><path d="M1155 203.900 H1164.400 M1155 206.500 H1164.400 M1155 211.800 H1164.400 M1155 214.500 H1164.400" stroke-width="1.300"/></g></svg>
</aside>
<div style="left:1173px;top:183px;width:8px;height:398px;background:#fcfcfc;"></div>
<div style="left:1173.500px;top:369.300px;width:4.800px;height:23.500px;background:#e4e4e4;border:1px solid #bdbdbd;border-radius:2px"></div>
<footer>
<div style="left:1px;top:581px;width:1180px;height:20px;background:linear-gradient(#ffffff,#f4f4f4);"></div>
<span style="left:6.2px;top:585px;font-size:12px;line-height:12px;color:#111;transform:scaleX(0.9512);transform-origin:0 0;">Rows Loaded: 11</span>
<span style="left:99.9px;top:585px;font-size:12px;line-height:12px;color:#111;">|</span>
<span style="left:109px;top:585px;font-size:12px;line-height:12px;color:#111;transform:scaleX(0.9527);transform-origin:0 0;">Rows Displayed: 11</span>
<span style="left:215.4px;top:585px;font-size:12px;line-height:12px;color:#111;">|</span>
<span style="left:224.4px;top:585px;font-size:12px;line-height:12px;color:#111;transform:scaleX(0.9241);transform-origin:0 0;">Rows Selected: 1</span>
<span style="left:317px;top:585px;font-size:12px;line-height:12px;color:#111;">|</span>
<span style="left:326.4px;top:585px;font-size:12px;line-height:12px;color:#111;letter-spacing:-0.027px;">Hierarchy view with 1 top row(s)</span>
<div style="left:0px;top:601px;width:1182px;height:20px;background:#7a50c2;"></div>
<span style="left:4.3px;top:606px;font-size:12px;line-height:12px;color:#fff;transform:scaleX(0.8995);transform-origin:0 0;">Ready</span>
<span style="left:1059.6px;top:606px;font-size:12px;line-height:12px;color:#a58ad6;transform:scaleX(0.8992);transform-origin:0 0;">CAP</span>
<span style="left:1092.6px;top:606px;font-size:12px;line-height:12px;color:#fff;letter-spacing:0.309px;">NUM</span>
<span style="left:1130.5px;top:606px;font-size:12px;line-height:12px;color:#a58ad6;transform:scaleX(0.8184);transform-origin:0 0;">SCRL</span>
</footer>
<div style="left:0px;top:0px;width:1182px;height:1px;background:#7a50c2;"></div>
<div style="left:0px;top:0px;width:1px;height:621px;background:#7a50c2;"></div>
<div style="left:1181px;top:0px;width:1px;height:621px;background:#7a50c2;"></div>
</div></body></html>
